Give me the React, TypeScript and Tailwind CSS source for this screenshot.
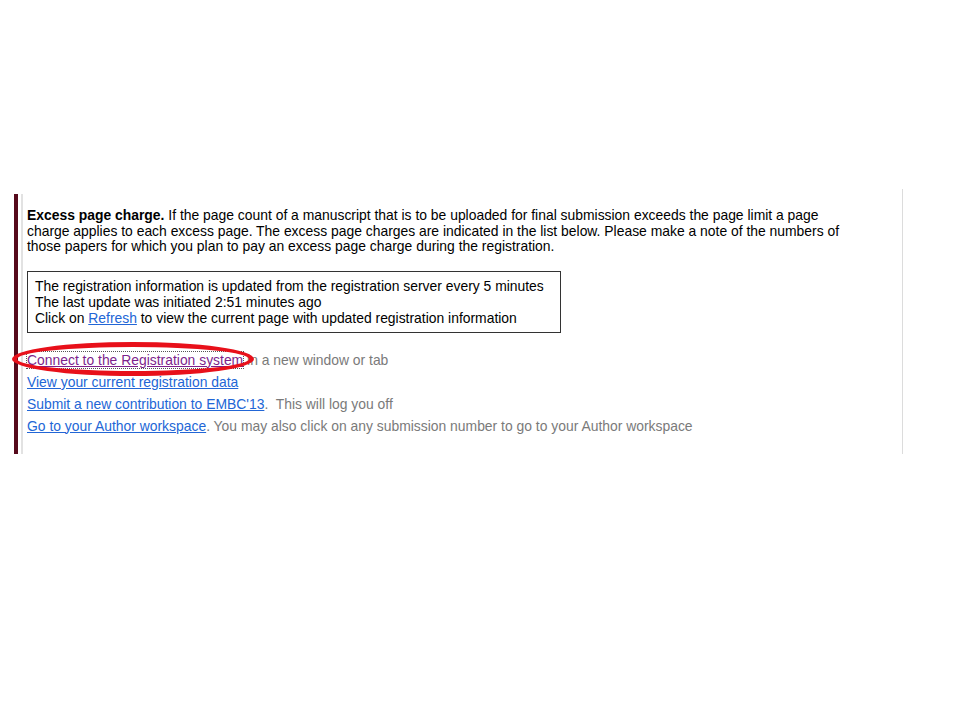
import React from "react";

const font = { fontFamily: '"Liberation Sans", Arial, sans-serif' };

function LinkRow({ children }: { children: React.ReactNode }) {
  return <div className="h-[22px] leading-[22px]">{children}</div>;
}

export default function App() {
  return (
    <div className="w-[960px] h-[720px] bg-white relative text-[13.9px] text-[#000]" style={font}>
      <div className="pt-[194px] flex">
        {/* left maroon rail + light rule */}
        <div className="ml-[14px] w-[4px] h-[260px] bg-[#560a1c]" />
        <div className="ml-[3px] w-[2px] h-[260px] bg-[#e2e2e2]" />
        <div className="w-[879px] h-[260px] relative">
          <div className="pl-[4px] pr-[40px] pt-[14px]">
            <p className="leading-[15.5px] w-[820px]">
              <b>Excess page charge.</b> If the page count of a manuscript that is to be uploaded for final submission exceeds the page limit a page charge applies to each excess page. The excess page charges are indicated in the list below. Please make a note of the numbers of those papers for which you plan to pay an excess page charge during the registration.
            </p>
            <div className="mt-[16px] w-[534px] border border-[#333] px-[7px] py-[6px] leading-[16px]">
              <div>The registration information is updated from the registration server every 5 minutes</div>
              <div>The last update was initiated 2:51 minutes ago</div>
              <div>
                Click on <span className="text-[#2266d6] underline">Refresh</span> to view the current page with updated registration information
              </div>
            </div>
            <div className="mt-[16px] text-[#7a7a7a]">
              <LinkRow>
                <span className="text-[#7d1f8c] underline outline-1 outline-dotted outline-[#555]">Connect to the Registration system</span> in a new window or tab
              </LinkRow>
              <LinkRow>
                <span className="text-[#2266d6] underline">View your current registration data</span>
              </LinkRow>
              <LinkRow>
                <span className="text-[#2266d6] underline">Submit a new contribution to EMBC'13</span>.&nbsp; This will log you off
              </LinkRow>
              <LinkRow>
                <span className="text-[#2266d6] underline">Go to your Author workspace</span>. You may also click on any submission number to go to your Author workspace
              </LinkRow>
            </div>
          </div>
        </div>
        <div className="w-[1px] h-[265px] -mt-[5px] bg-[#dcdcdc]" />
      </div>
      {/* red annotation ellipse */}
      <div className="absolute left-[12px] top-[342px] w-[242px] h-[34px] rounded-[50%] border-[5px] border-[#e8101a]" />
    </div>
  );
}
